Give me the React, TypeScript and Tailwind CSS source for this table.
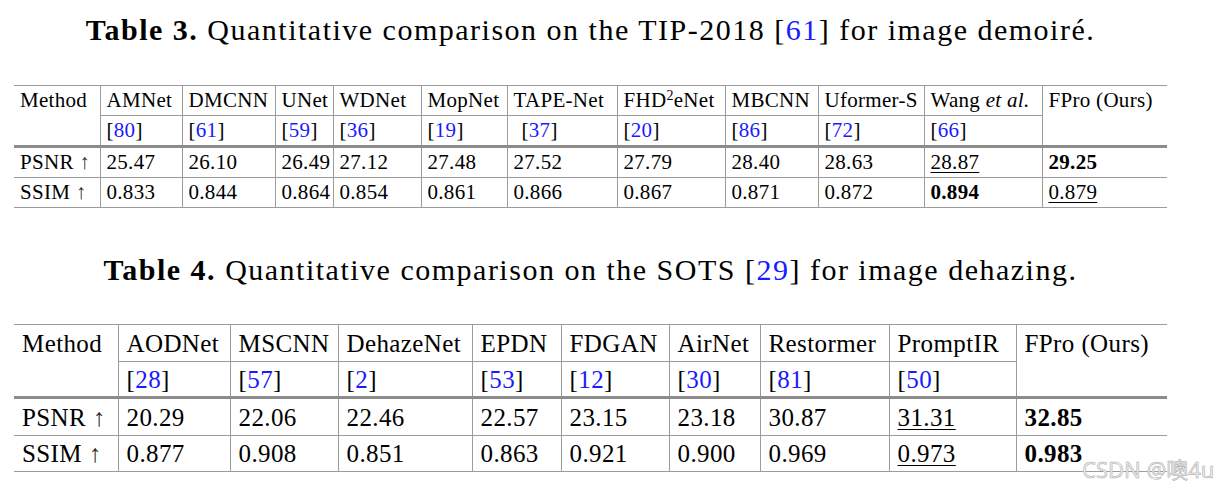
import React from "react";

type Cell = { text: React.ReactNode; ref?: string };

const Ref = ({ n }: { n: string }) => (
  <span>
    [<span className="text-[#1a1aff]">{n}</span>]
  </span>
);

const t3Cols = ["w-[86px]", "w-[82px]", "w-[93px]", "w-[58px]", "w-[88px]", "w-[86px]", "w-[110px]", "w-[108px]", "w-[93px]", "w-[106px]", "w-[118px]", "w-[125px]"];
const t4Cols = ["w-[104px]", "w-[112px]", "w-[108px]", "w-[134px]", "w-[89px]", "w-[108px]", "w-[91px]", "w-[129px]", "w-[127px]", "w-[151px]"];

const t3Methods: Cell[] = [
  { text: "AMNet", ref: "80" },
  { text: "DMCNN", ref: "61" },
  { text: "UNet", ref: "59" },
  { text: "WDNet", ref: "36" },
  { text: "MopNet", ref: "19" },
  { text: "TAPE-Net", ref: "37" },
  {
    text: (
      <>
        FHD<span className="relative -top-[7px] text-[14px]">2</span>eNet
      </>
    ),
    ref: "20",
  },
  { text: "MBCNN", ref: "86" },
  { text: "Uformer-S", ref: "72" },
  {
    text: (
      <>
        Wang <i>et al.</i>
      </>
    ),
    ref: "66",
  },
];

const t4Methods: Cell[] = [
  { text: "AODNet", ref: "28" },
  { text: "MSCNN", ref: "57" },
  { text: "DehazeNet", ref: "2" },
  { text: "EPDN", ref: "53" },
  { text: "FDGAN", ref: "12" },
  { text: "AirNet", ref: "30" },
  { text: "Restormer", ref: "81" },
  { text: "PromptIR", ref: "50" },
];

const U = ({ children }: { children: React.ReactNode }) => (
  <span className="underline decoration-1 underline-offset-[3px]">{children}</span>
);

const t3Psnr: React.ReactNode[] = ["25.47", "26.10", "26.49", "27.12", "27.48", "27.52", "27.79", "28.40", "28.63", <U>28.87</U>, <b>29.25</b>];
const t3Ssim: React.ReactNode[] = ["0.833", "0.844", "0.864", "0.854", "0.861", "0.866", "0.867", "0.871", "0.872", <b>0.894</b>, <U>0.879</U>];

const t4Psnr: React.ReactNode[] = ["20.29", "22.06", "22.46", "22.57", "23.15", "23.18", "30.87", <U>31.31</U>, <b>32.85</b>];
const t4Ssim: React.ReactNode[] = ["0.877", "0.908", "0.851", "0.863", "0.921", "0.900", "0.969", <U>0.973</U>, <b>0.983</b>];

const Arrow = () => <span className="text-[#3a2a1a]">↑</span>;

function ResultTable({
  cols,
  methods,
  psnr,
  ssim,
  big,
}: {
  cols: string[];
  methods: Cell[];
  psnr: React.ReactNode[];
  ssim: React.ReactNode[];
  big?: boolean;
}) {
  const line = "border-[#9c9c9c]";
  const pad = big ? "pl-[8px]" : "pl-[6px]";
  const size = big ? "text-[25px] tracking-[0.4px]" : "text-[21px] tracking-[0.3px]";
  const h = big ? ["h-[37px]", "h-[36px]", "h-[38px]", "h-[36px]"] : ["h-[30px]", "h-[31px]", "h-[31px]", "h-[30px]"];

  return (
    <table className={`table-fixed border-collapse w-[1153px] border-t border-b leading-none ${line} ${size}`}>
      <colgroup>
        {cols.map((c, i) => (
          <col key={i} className={c} />
        ))}
      </colgroup>
      <tbody>
        <tr className={h[0]}>
          <td className={`${pad} whitespace-nowrap align-middle`}>Method</td>
          {methods.map((m, i) => (
            <td key={i} className={`${pad} whitespace-nowrap border-l ${line} align-middle`}>
              {m.text}
            </td>
          ))}
          <td className={`${pad} whitespace-nowrap border-l ${line} align-middle`}>FPro (Ours)</td>
        </tr>
        <tr className={h[1]}>
          <td />
          {methods.map((m, i) => (
            <td
              key={i}
              className={`${m.ref === "37" ? "pl-[14px]" : pad} whitespace-nowrap border-l border-t ${line} align-middle`}
            >
              <Ref n={m.ref!} />
            </td>
          ))}
          <td className={`border-l ${line}`} />
        </tr>
        <tr className={`${h[2]} border-t-[3px] border-[#8c8c8c]`}>
          <td className={`${pad} whitespace-nowrap align-middle`}>
            PSNR <Arrow />
          </td>
          {psnr.map((v, i) => (
            <td key={i} className={`${pad} whitespace-nowrap border-l ${line} align-middle`}>
              {v}
            </td>
          ))}
        </tr>
        <tr className={`${h[3]} border-t ${line}`}>
          <td className={`${pad} whitespace-nowrap align-middle`}>
            SSIM <Arrow />
          </td>
          {ssim.map((v, i) => (
            <td key={i} className={`${pad} whitespace-nowrap border-l ${line} align-middle`}>
              {v}
            </td>
          ))}
        </tr>
      </tbody>
    </table>
  );
}

export default function App() {
  return (
    <div className="relative w-[1223px] h-[489px] overflow-hidden bg-white text-black font-['Liberation_Serif',serif]">
      <div className="ml-[14px] w-[1153px]">
        <p className="pt-[13px] text-center text-[30px] leading-[33px] tracking-[1.5px] whitespace-nowrap">
          <b>Table 3.</b> Quantitative comparison on the TIP-2018 <Ref n="61" /> for image demoiré.
        </p>
        <div className="mt-[39px]">
          <ResultTable cols={t3Cols} methods={t3Methods} psnr={t3Psnr} ssim={t3Ssim} />
        </div>
        <p className="mt-[45px] text-center text-[30px] leading-[33px] tracking-[1.5px] whitespace-nowrap">
          <b>Table 4.</b> Quantitative comparison on the SOTS <Ref n="29" /> for image dehazing.
        </p>
        <div className="mt-[38px]">
          <ResultTable cols={t4Cols} methods={t4Methods} psnr={t4Psnr} ssim={t4Ssim} big />
        </div>
      </div>
      <span className="absolute left-[1082px] top-[455px] text-[22px] leading-[28px] text-[#ececec] font-['Noto_Sans','Noto_Sans_CJK_SC',sans-serif] [-webkit-text-stroke:0.5px_#a8a8a8]">
        CSDN @噢4u
      </span>
    </div>
  );
}
